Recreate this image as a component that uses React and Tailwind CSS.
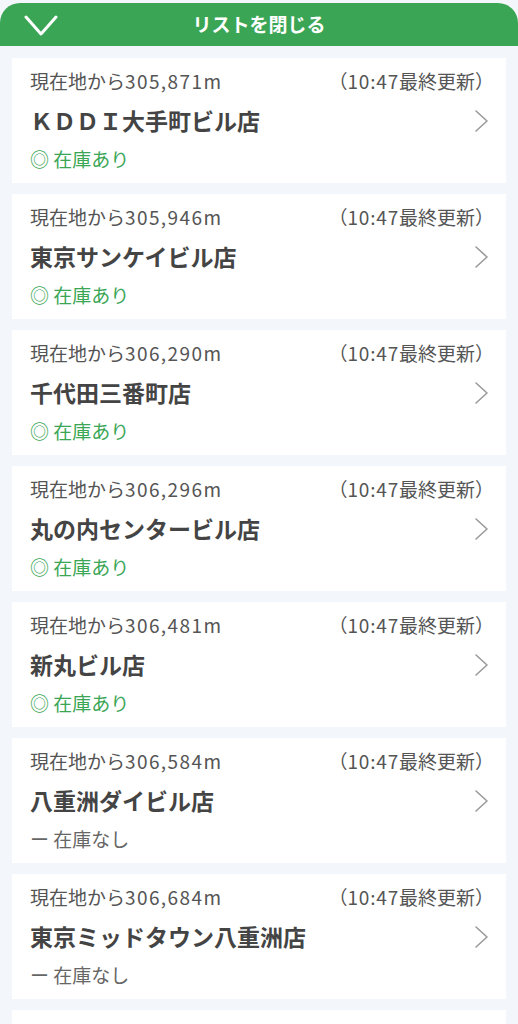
const stores = [
  { dist: '305,871', name: 'ＫＤＤＩ大手町ビル店', stock: true },
  { dist: '305,946', name: '東京サンケイビル店', stock: true },
  { dist: '306,290', name: '千代田三番町店', stock: true },
  { dist: '306,296', name: '丸の内センタービル店', stock: true },
  { dist: '306,481', name: '新丸ビル店', stock: true },
  { dist: '306,584', name: '八重洲ダイビル店', stock: false },
  { dist: '306,684', name: '東京ミッドタウン八重洲店', stock: false },
]

const font = { fontFamily: '"Noto Sans CJK JP", "Noto Sans", sans-serif' }

export default function App() {
  return (
    <div className="h-screen bg-[#f3f6fa] pt-[3px] overflow-hidden" style={font}>
      {/* Close list bar */}
      <div className="relative h-[43px] rounded-t-[20px] bg-[#3aa655] flex items-center justify-center">
        <svg className="absolute left-[24px] top-[12px]" width="34" height="22" viewBox="0 0 34 22" fill="none">
          <path d="M2 2 L17 19 L32 2" stroke="white" strokeWidth="3" strokeLinecap="round" strokeLinejoin="round" />
        </svg>
        <span className="text-white text-[19px] font-bold">リストを閉じる</span>
      </div>

      <div className="px-[12px] pt-[12px] flex flex-col gap-[11px]">
        {stores.map((s) => (
          <StoreCard key={s.name} store={s} />
        ))}
        {/* next card, cut off by the screen edge */}
        <div className="h-[125px] shrink-0 bg-white" />
      </div>
    </div>
  )
}

function StoreCard({ store }) {
  return (
    <div className="h-[125px] shrink-0 bg-white px-[18px] pt-[4px]">
      <div className="h-[39px] flex items-center justify-between text-[19px] text-[#555]">
        <span>
          現在地から<span className="tracking-[1.4px]">{store.dist}m</span>
        </span>
        <span className="mr-[-6px]">
          （<span className="tracking-[0.8px]">10:47</span>最終更新）
        </span>
      </div>
      <div className="h-[39px] flex items-center justify-between">
        <span className="text-[23px] font-bold text-[#444]">{store.name}</span>
        <svg width="15" height="24" viewBox="0 0 15 24" fill="none" className="mr-[-1px]">
          <path d="M2 2 L13 12 L2 22" stroke="#9a9a9a" strokeWidth="1.6" strokeLinecap="round" strokeLinejoin="round" />
        </svg>
      </div>
      <div className="h-[39px] flex items-center text-[19px]">
        {store.stock ? (
          <span className="text-[#3aa655]">◎ 在庫あり</span>
        ) : (
          <span className="text-[#666]">ー 在庫なし</span>
        )}
      </div>
    </div>
  )
}
